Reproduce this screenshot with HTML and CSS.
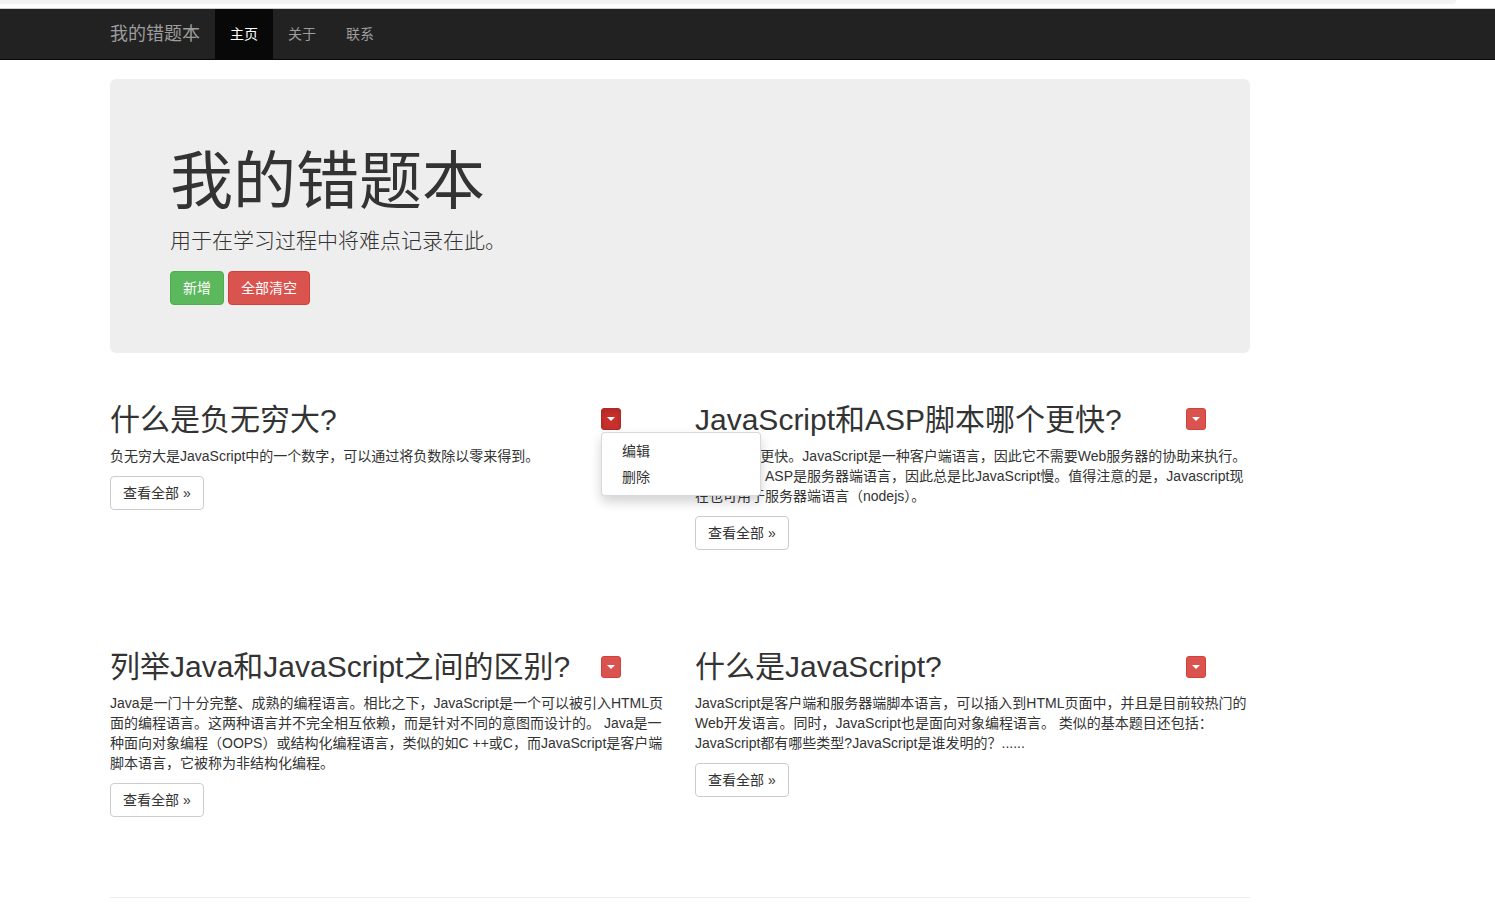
FILE: index.html
```html
<!DOCTYPE html>
<html lang="zh-CN">
<head>
<meta charset="utf-8">
<title>我的错题本</title>
<link rel="stylesheet" href="styles.css">
</head>
<body>
<div class="chrome"><div class="chrome-bar"></div></div>
<nav class="navbar">
  <div class="nav-inner">
    <a class="brand" href="#">我的错题本</a>
    <ul class="nav">
      <li class="active"><a href="#">主页</a></li>
      <li><a href="#">关于</a></li>
      <li><a href="#">联系</a></li>
    </ul>
  </div>
</nav>
<div class="container">
  <div class="jumbotron">
    <h1>我的错题本</h1>
    <p class="lead">用于在学习过程中将难点记录在此。</p>
    <div class="actions">
      <a class="btn btn-success" href="#">新增</a>
      <a class="btn btn-danger" href="#">全部清空</a>
    </div>
  </div>

  <div class="row row-first">
    <div class="col">
      <div class="dropdown">
        <button class="btn-xs btn-danger open-btn"><span class="caret"></span></button>
        <ul class="dropdown-menu">
          <li><a href="#">编辑</a></li>
          <li><a href="#">删除</a></li>
        </ul>
      </div>
      <h2>什么是负无穷大?</h2>
      <p>负无穷大是JavaScript中的一个数字，可以通过将负数除以零来得到。</p>
      <p><a class="btn btn-default" href="#">查看全部 »</a></p>
    </div>
    <div class="col">
      <div class="dropdown">
        <button class="btn-xs btn-danger"><span class="caret"></span></button>
      </div>
      <h2>JavaScript和ASP脚本哪个更快?</h2>
      <p>JavaScript更快。JavaScript是一种客户端语言，因此它不需要Web服务器的协助来执行。另一方面，ASP是服务器端语言，因此总是比JavaScript慢。值得注意的是，Javascript现在也可用于服务器端语言（nodejs）。</p>
      <p><a class="btn btn-default" href="#">查看全部 »</a></p>
    </div>
  </div>

  <div class="row">
    <div class="col">
      <div class="dropdown">
        <button class="btn-xs btn-danger"><span class="caret"></span></button>
      </div>
      <h2>列举Java和JavaScript之间的区别?</h2>
      <p>Java是一门十分完整、成熟的编程语言。相比之下，JavaScript是一个可以被引入HTML页面的编程语言。这两种语言并不完全相互依赖，而是针对不同的意图而设计的。 Java是一种面向对象编程（OOPS）或结构化编程语言，类似的如C ++或C，而JavaScript是客户端脚本语言，它被称为非结构化编程。</p>
      <p><a class="btn btn-default" href="#">查看全部 »</a></p>
    </div>
    <div class="col">
      <div class="dropdown">
        <button class="btn-xs btn-danger"><span class="caret"></span></button>
      </div>
      <h2>什么是JavaScript?</h2>
      <p>JavaScript是客户端和服务器端脚本语言，可以插入到HTML页面中，并且是目前较热门的Web开发语言。同时，JavaScript也是面向对象编程语言。 类似的基本题目还包括：JavaScript都有哪些类型?JavaScript是谁发明的？......</p>
      <p><a class="btn btn-default" href="#">查看全部 »</a></p>
    </div>
  </div>

  <hr>
</div>
</body>
</html>
```

FILE: styles.css
```css
* { box-sizing: border-box; }

html, body {
  margin: 0;
  padding: 0;
  background: #fff;
}

body {
  font-family: "Liberation Sans", Arial, "Noto Sans CJK SC", sans-serif;
  font-size: 14px;
  line-height: 20px;
  color: #333;
  overflow: hidden;
}

a { text-decoration: none; }

.chrome {
  height: 9px;
  border-bottom: 1px solid #cfcfcf;
  background: #fff;
}

.chrome-bar {
  width: 1456px;
  height: 4px;
  background: #f1f3f4;
  border-bottom-right-radius: 4px;
}

.navbar {
  background: #222;
  border-bottom: 1px solid #080808;
  height: 51px;
}

.nav-inner {
  margin-left: 95px;
  display: flex;
  height: 50px;
}

.brand {
  display: block;
  padding: 15px;
  font-size: 18px;
  line-height: 20px;
  height: 50px;
  color: #9d9d9d;
}

.nav {
  display: flex;
  list-style: none;
  margin: 0;
  padding: 0;
}

.nav li a {
  display: block;
  padding: 15px;
  line-height: 20px;
  height: 50px;
  color: #9d9d9d;
}

.nav li.active a {
  background: #080808;
  color: #fff;
}

.container {
  margin-left: 95px;
  width: 1170px;
  padding: 0 15px;
}

.jumbotron {
  margin-top: 19px;
  background: #eee;
  border-radius: 6px;
  padding: 48px 60px 48px;
}

.jumbotron h1 {
  margin: 20px 0 10px;
  font-size: 63px;
  line-height: 69px;
  font-weight: 400;
  color: #333;
}

.jumbotron .lead {
  margin: 0 0 15px;
  font-size: 21px;
  line-height: 30px;
  font-weight: 300;
  color: #333;
}

.actions {
  display: flex;
  gap: 4px;
}

.btn {
  display: inline-block;
  padding: 6px 12px;
  font-size: 14px;
  line-height: 20px;
  border: 1px solid transparent;
  border-radius: 4px;
  white-space: nowrap;
}

.btn-success {
  background: #5cb85c;
  border-color: #4cae4c;
  color: #fff;
}

.btn-danger {
  background: #d9534f;
  border-color: #d43f3a;
  color: #fff;
}

.btn-default {
  background: #fff;
  border-color: #ccc;
  color: #333;
}

.row {
  display: flex;
  margin: 0 -15px;
  height: 248px;
}

.row-first {
  margin-top: 30px;
  height: 247px;
}

.col {
  position: relative;
  width: 585px;
  padding: 0 15px;
}

.col h2 {
  margin: 20px 0 10px;
  font-size: 30px;
  line-height: 33px;
  font-weight: 400;
  color: #333;
}

.col p {
  margin: 0 0 10px;
}

.dropdown {
  position: absolute;
  left: 506px;
  top: 26px;
  z-index: 5;
}

.row-first .dropdown {
  top: 25px;
}

.btn-xs {
  width: 20px;
  height: 22px;
  padding: 0;
  border: 1px solid #d43f3a;
  border-radius: 3px;
  background: #d9534f;
  font-size: 0;
  line-height: 0;
  display: flex;
  align-items: center;
  justify-content: center;
  cursor: pointer;
}

.btn-xs.open-btn {
  background: #c9302c;
  border-color: #ac2925;
  box-shadow: inset 0 3px 5px rgba(0,0,0,.125);
}

.caret {
  display: block;
  width: 0;
  height: 0;
  border-top: 4px solid #fff;
  border-left: 4px solid transparent;
  border-right: 4px solid transparent;
}

.dropdown-menu {
  position: absolute;
  top: 24px;
  left: 0;
  min-width: 160px;
  margin: 0;
  padding: 5px 0;
  list-style: none;
  background: #fff;
  border: 1px solid rgba(0,0,0,.15);
  border-radius: 4px;
  box-shadow: 0 6px 12px rgba(0,0,0,.175);
}

.dropdown-menu li a {
  display: block;
  padding: 3px 20px;
  line-height: 20px;
  color: #333;
  white-space: nowrap;
}

hr {
  margin: 19px 0 20px;
  border: 0;
  border-top: 1px solid #eee;
}
```
